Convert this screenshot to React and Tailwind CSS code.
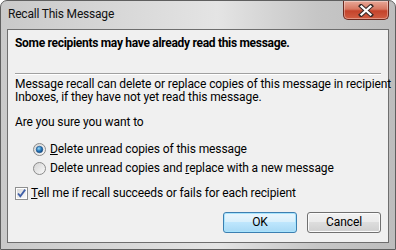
import React from 'react';

const font = { fontFamily: 'Roboto, "Liberation Sans", Arial, sans-serif' };

const Radio = ({ checked }) => (
  <svg width="13" height="13" viewBox="0 0 13 13" className="shrink-0">
    <defs>
      <linearGradient id={checked ? 'rg1' : 'rg0'} x1="0" y1="0" x2="1" y2="1">
        <stop offset="0" stopColor="#d2d2d2" />
        <stop offset="1" stopColor="#fbfbfb" />
      </linearGradient>
      <radialGradient id="dot" cx="0.4" cy="0.35" r="0.7">
        <stop offset="0" stopColor="#9fdcf7" />
        <stop offset="0.5" stopColor="#2b7fc0" />
        <stop offset="1" stopColor="#0b3f78" />
      </radialGradient>
    </defs>
    <circle cx="6.5" cy="6.5" r="6" fill={`url(#${checked ? 'rg1' : 'rg0'})`} stroke="#8a8a8a" />
    {checked && <circle cx="6.5" cy="6.5" r="3.3" fill="url(#dot)" stroke="#1c4f86" strokeWidth="0.6" />}
  </svg>
);

const Check = () => (
  <svg width="13" height="13" viewBox="0 0 13 13" className="shrink-0">
    <defs>
      <linearGradient id="cb" x1="0" y1="0" x2="1" y2="1">
        <stop offset="0" stopColor="#d9d9d9" />
        <stop offset="1" stopColor="#fbfbfb" />
      </linearGradient>
    </defs>
    <rect x="0.5" y="0.5" width="12" height="12" fill="#fff" stroke="#8e8f8f" />
    <rect x="2" y="2" width="9" height="9" fill="url(#cb)" />
    <path d="M3 6.5 L5.3 9.2 L10.2 2.6" fill="none" stroke="#4060a8" strokeWidth="1.8" />
  </svg>
);

export default function App() {
  return (
    <div className="w-[396px] h-[250px] overflow-hidden bg-white">
      <div
        className="w-[396px] h-[250px] flex flex-col rounded-t-[7px] border border-[#5f5f5f] bg-[linear-gradient(90deg,#c9c9c9_0%,#dadada_35%,#e4e4e4_55%,#c6c6c6_80%,#bdbdbd_100%)] text-black text-[12px] tracking-[-0.1px]"
        style={font}
      >
        {/* Title bar */}
        <div className="h-[28px] flex items-start justify-between shrink-0">
          <div className="pl-[7px] pt-[6px] leading-[15px] text-[#111] tracking-[-0.2px]">Recall This Message</div>
          <div className="mr-[6px] w-[46px] h-[19px] rounded-b-[5px] border border-t-0 border-[#6b2a20] bg-[linear-gradient(180deg,#e8a898_0%,#d77761_45%,#c4432b_55%,#d15e43_100%)] flex items-center justify-center shadow-[inset_0_0_0_1px_rgba(255,255,255,0.35)]">
            <svg width="16" height="13" viewBox="0 0 16 13">
              <path d="M3 2 L13 11 M13 2 L3 11" stroke="#3a2a28" strokeWidth="4.2" strokeLinecap="square" />
              <path d="M3.5 2.5 L12.5 10.5 M12.5 2.5 L3.5 10.5" stroke="#ffffff" strokeWidth="2.2" strokeLinecap="square" />
            </svg>
          </div>
        </div>

        {/* Client area */}
        <div className="flex-1 mx-[6px] mb-[6px] border border-[#6e6e6e] bg-[#f0f0f0] flex flex-col px-[7px] pt-[6px] leading-[15px] whitespace-nowrap">
          <div className="font-bold tracking-[-0.3px]">Some recipients may have already read this message.</div>
          <div className="mt-[22px] h-[1px] bg-[#a0a0a0] border-b border-white box-content"></div>
          <div className="mt-[3px] leading-[13px]">
            <div>Message recall can delete or replace copies of this message in recipient</div>
            <div>Inboxes, if they have not yet read this message.</div>
          </div>
          <div className="mt-[11px]">Are you sure you want to</div>
          <div className="mt-[12px] pl-[18px] flex flex-col gap-[4px]">
            <div className="flex items-center gap-[4px]">
              <Radio checked />
              <span><u>D</u>elete unread copies of this message</span>
            </div>
            <div className="flex items-center gap-[4px]">
              <Radio />
              <span>Delete unread copies and <u>r</u>eplace with a new message</span>
            </div>
          </div>
          <div className="mt-[10px] flex items-center gap-[3px]">
            <Check />
            <span><u>T</u>ell me if recall succeeds or fails for each recipient</span>
          </div>
          <div className="mt-[11px] flex justify-end gap-[10px]">
            <button className="w-[74px] h-[21px] rounded-[3px] border border-[#3c7fb1] bg-[linear-gradient(180deg,#eaf6fd_0%,#d9f0fc_45%,#bee6fd_50%,#a7d9f5_100%)] shadow-[inset_0_0_0_1px_#a8e4fd] text-[12px]">OK</button>
            <button className="w-[74px] h-[21px] rounded-[3px] border border-[#707070] bg-[linear-gradient(180deg,#f2f2f2_0%,#ebebeb_45%,#dddddd_50%,#cfcfcf_100%)] shadow-[inset_0_0_0_1px_#fbfbfb] text-[12px]">Cancel</button>
          </div>
        </div>
      </div>
    </div>
  );
}
